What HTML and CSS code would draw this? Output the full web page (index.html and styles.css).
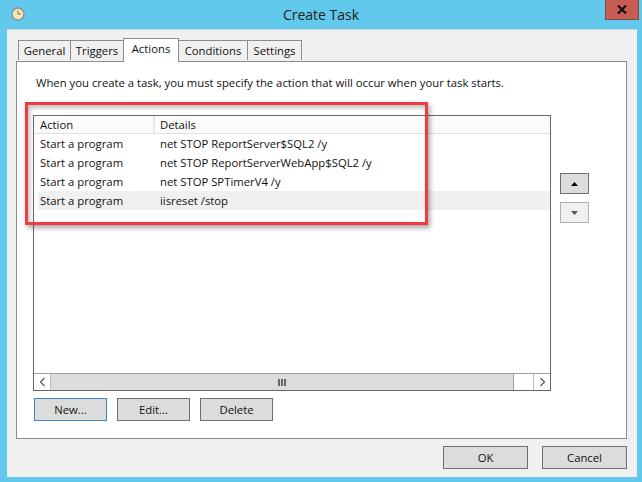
FILE: index.html
```html
<!DOCTYPE html>
<html lang="en">
<head>
<meta charset="utf-8">
<title>Create Task</title>
<link rel="stylesheet" href="styles.css">
</head>
<body>
<div class="window">
  <header class="titlebar">
    <svg class="clock" width="14" height="14" viewBox="0 0 14 14"><circle cx="7" cy="7" r="6" fill="#f3e7b8" stroke="#8a8f94" stroke-width="1.4"/><path d="M7 3.5V7H10" fill="none" stroke="#8a7a40" stroke-width="1.1"/></svg>
    <h1 class="title">Create Task</h1>
    <button class="close"><svg width="10" height="9" viewBox="0 0 10 9"><path d="M1 .5L9 8.5M9 .5L1 8.5" stroke="#111" stroke-width="2.2"/></svg></button>
  </header>
  <main class="client">
    <nav class="tabs">
      <span class="tab t-general">General</span>
      <span class="tab t-triggers">Triggers</span>
      <span class="tab active">Actions</span>
      <span class="tab t-conditions">Conditions</span>
      <span class="tab t-settings">Settings</span>
    </nav>
    <section class="panel">
      <p class="intro">When you create a task, you must specify the action that will occur when your task starts.</p>
      <div class="middle">
        <div class="list">
          <div class="row head"><span class="c1">Action</span><span class="c2">Details</span></div>
          <div class="rows">
            <div class="row"><span class="c1">Start a program</span><span class="c2">net STOP ReportServer$SQL2 /y</span></div>
            <div class="row"><span class="c1">Start a program</span><span class="c2">net STOP ReportServerWebApp$SQL2 /y</span></div>
            <div class="row"><span class="c1">Start a program</span><span class="c2">net STOP SPTimerV4 /y</span></div>
            <div class="row selected"><span class="c1">Start a program</span><span class="c2">iisreset /stop</span></div>
          </div>
          <div class="scrollbar">
            <span class="sb-btn"><svg width="7" height="10" viewBox="0 0 7 10"><path d="M5.5 1L1.5 5L5.5 9" fill="none" stroke="#555" stroke-width="1.2"/></svg></span>
            <span class="sb-track"><span class="grip"></span></span>
            <span class="sb-blank"></span>
            <span class="sb-btn right"><svg width="7" height="10" viewBox="0 0 7 10"><path d="M1.5 1L5.5 5L1.5 9" fill="none" stroke="#555" stroke-width="1.2"/></svg></span>
          </div>
        </div>
        <div class="movers">
          <button class="move"><svg width="7" height="4" viewBox="0 0 7 4"><path d="M3.5 0L7 4H0Z" fill="#000"/></svg></button>
          <button class="move off"><svg width="7" height="4" viewBox="0 0 7 4"><path d="M0 0H7L3.5 4Z" fill="#555"/></svg></button>
        </div>
      </div>
      <div class="actions">
        <button class="btn small focus">New...</button>
        <button class="btn small">Edit...</button>
        <button class="btn small">Delete</button>
      </div>
    </section>
    <footer class="footer">
      <button class="btn large">OK</button>
      <button class="btn large">Cancel</button>
    </footer>
  </main>
  <div class="annotation"></div>
</div>
</body>
</html>
```

FILE: styles.css
```css
* { box-sizing: border-box; }
html, body { margin: 0; padding: 0; }
body { width: 642px; height: 482px; overflow: hidden; background: #62c8ec; font-family: "Open Sans", "Noto Sans", sans-serif; font-size: 11.3px; color: #111; }
.window { position: relative; width: 642px; height: 482px; padding: 0 5px 5px 7px; display: flex; flex-direction: column; }
.titlebar { height: 29px; flex: none; position: relative; display: flex; justify-content: center; align-items: center; margin: 0 -5px 0 -7px; }
.clock { position: absolute; left: 11px; top: 7px; }
.title { margin: 0; font-size: 14px; font-weight: 400; color: #222; line-height: 29px; }
.close { position: absolute; right: 3px; top: 0; width: 34px; height: 20px; padding: 0; border: 1px solid #7c4a46; border-top: 0; background: #c75c52; display: flex; align-items: center; justify-content: center; }
.client { flex: 1; background: #f0f0f0; border-top: 1px solid #c8d8de; padding: 8px 9px 0; display: flex; flex-direction: column; }
.tabs { display: flex; height: 23px; align-items: flex-end; padding-left: 2px; position: relative; z-index: 1; }
.tab { height: 20px; margin-bottom: 1px; text-align: center; line-height: 19px; background: #f0f0f0; border: 1px solid #8c8c90; border-bottom: 0; margin-right: -1px; }
.t-general { width: 53px; }
.t-triggers { width: 54px; }
.t-conditions { width: 70px; }
.t-settings { width: 55px; }
.tab.active { width: 56px; height: 24px; margin-bottom: -1px; background: #fff; line-height: 19px; position: relative; margin-top: -3px; }
.panel { height: 378px; background: #fff; border: 1px solid #8c8c90; padding: 12px 16px 0; margin-right: 1px; display: flex; flex-direction: column; }
.intro { margin: 0 0 0 3px; line-height: 17px; height: 41px; }
.middle { display: flex; gap: 9px; }
.list { width: 518px; height: 276px; border: 1px solid #666; display: flex; flex-direction: column; }
.row { display: flex; height: 19px; line-height: 20px; }
.c1 { width: 120px; padding-left: 6px; flex: none; }
.c2 { padding-left: 6px; }
.head { height: 18px; line-height: 18px; background: #fbfbfb; border-bottom: 1px solid #e0e0e0; }
.head .c1 { border-right: 2px solid #e8e8e8; width: 121px; }
.head .c2 { padding-left: 5px; }
.rows { flex: 1; }
.selected { background: #f0f0f0; margin-left: 4px; }
.selected .c1 { width: 116px; padding-left: 2px; }
.scrollbar { height: 17px; display: flex; background: #dcdcdc; border-top: 1px solid #a0a0a0; }
.sb-btn { width: 17px; background: #fff; display: flex; align-items: center; justify-content: center; border-right: 1px solid #bdbdbd; }
.sb-btn.right { border-right: 0; border-left: 1px solid #bdbdbd; }
.sb-track { width: 462px; display: flex; align-items: center; justify-content: center; }
.grip { width: 8px; height: 7px; background: repeating-linear-gradient(90deg, #666 0 2px, transparent 2px 3px); }
.sb-blank { flex: 1; background: #fff; border-left: 1px solid #a0a0a0; }
.movers { display: flex; flex-direction: column; gap: 8px; padding-top: 58px; }
.move { width: 29px; height: 21px; padding: 0; background: #dcdcdc; border: 1px solid #707070; display: flex; align-items: center; justify-content: center; }
.move.off { background: #f0f0f0; border-color: #adb2b5; }
.actions { display: flex; gap: 10px; margin-top: 7px; margin-left: 1px; }
.btn { padding: 0; background: #dcdcdc; border: 1px solid #707070; font: inherit; color: #111; height: 23px; line-height: 20px; }
.small { width: 73px; }
.large { width: 85px; }
.focus { border-color: #3a88c0; }
.footer { display: flex; justify-content: flex-end; gap: 14px; margin-top: 7px; padding-right: 1px; }
.annotation { position: absolute; left: 25px; top: 102px; width: 403px; height: 123px; border: 3px solid #ef3b43; box-shadow: 2px 3px 5px rgba(0,0,0,.35), inset 2px 3px 4px rgba(0,0,0,.25); pointer-events: none; }
```
